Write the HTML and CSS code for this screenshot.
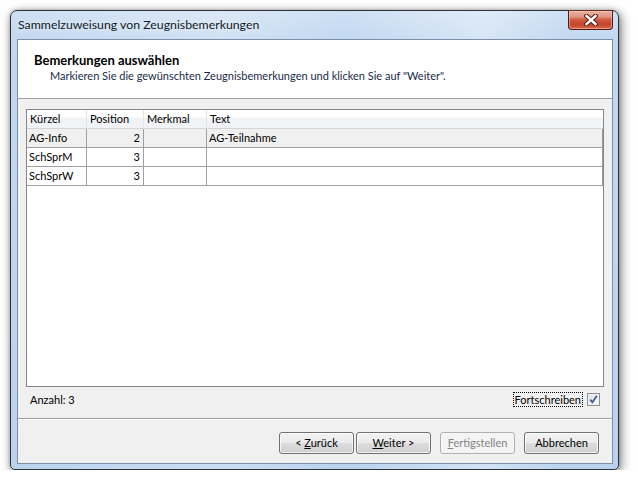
FILE: index.html
```html
<!DOCTYPE html>
<html lang="de">
<head>
<meta charset="utf-8">
<title>Sammelzuweisung von Zeugnisbemerkungen</title>
<link rel="stylesheet" href="styles.css">
</head>
<body>
<div class="desk">
  <div class="window">
    <div class="titlebar">
      <span class="title">Sammelzuweisung von Zeugnisbemerkungen</span>
      <div class="close">
        <svg width="14" height="12" viewBox="0 0 14 12">
          <path d="M2.5 2 L11.5 10 M11.5 2 L2.5 10" stroke="#5a2016" stroke-width="4.6" stroke-linecap="square" fill="none"/>
          <path d="M2.5 2 L11.5 10 M11.5 2 L2.5 10" stroke="#ffffff" stroke-width="2.4" stroke-linecap="square" fill="none"/>
        </svg>
      </div>
    </div>
    <div class="client">
      <div class="header">
        <div class="h-title">Bemerkungen auswählen</div>
        <div class="h-sub">Markieren Sie die gewünschten Zeugnisbemerkungen und klicken Sie auf "Weiter".</div>
      </div>
      <div class="content">
        <div class="grid">
          <table class="tbl">
            <thead>
              <tr>
                <th class="c1">Kürzel</th>
                <th class="c2">Position</th>
                <th class="c3">Merkmal</th>
                <th class="c4">Text</th>
              </tr>
            </thead>
            <tbody>
              <tr class="sel">
                <td>AG-Info</td>
                <td class="num">2</td>
                <td></td>
                <td class="last">AG-Teilnahme</td>
              </tr>
              <tr>
                <td>SchSprM</td>
                <td class="num">3</td>
                <td></td>
                <td class="last"></td>
              </tr>
              <tr>
                <td>SchSprW</td>
                <td class="num">3</td>
                <td></td>
                <td class="last"></td>
              </tr>
            </tbody>
          </table>
        </div>
        <div class="status">
          <span class="count">Anzahl: 3</span>
          <div class="chk">
            <span class="focus">Fortschreiben</span>
            <span class="box">
              <svg width="11" height="11" viewBox="0 0 11 11">
                <path d="M2.2 5.6 L4.4 8.3 L8.9 1.8" stroke="#3d5a98" stroke-width="1.7" fill="none"/>
              </svg>
            </span>
          </div>
        </div>
      </div>
      <div class="footer">
        <div class="btn"><span>&lt; <u>Z</u>urück</span></div>
        <div class="btn btn-next"><span><u>W</u>eiter &gt;</span></div>
        <div class="btn disabled"><span><u>F</u>ertigstellen</span></div>
        <div class="btn"><span>Abbrechen</span></div>
      </div>
    </div>
  </div>
</div>
</body>
</html>
```

FILE: styles.css
```css
html, body {
  margin: 0;
  padding: 0;
  background: #ffffff;
}

body {
  font-family: Lato, "Noto Sans", "DejaVu Sans", sans-serif;
  font-size: 11px;
  color: #000;
}

.desk {
  padding: 10px 0 0 10px;
}

.window {
  width: 596px;
  height: 453px;
  border: 1px solid #2c3038;
  border-radius: 7px 7px 5px 5px;
  padding: 0 5px 5px 6px;
  background:
    linear-gradient(90deg, rgba(255,255,255,0) 0, rgba(255,255,255,0.25) 35%, rgba(255,255,255,0) 55%, rgba(255,255,255,0.35) 78%, rgba(255,255,255,0) 92%),
    linear-gradient(180deg, #cfe0f4 0, #c2d8f0 28px, #b9d3ee 100%);
  box-shadow: 2px 3px 11px rgba(0, 0, 0, 0.5), 0 0 4px rgba(0, 0, 0, 0.25);
  display: flex;
  flex-direction: column;
}

.titlebar {
  height: 28px;
  display: flex;
  align-items: flex-start;
}

.title {
  margin-top: 6px;
  padding-left: 1px;
  font-size: 12.3px;
  line-height: 16px;
  color: #111a26;
  text-shadow: 0 0 6px rgba(255, 255, 255, 0.9);
}

.close {
  margin-left: auto;
  margin-top: -1px;
  width: 43px;
  height: 18px;
  border: 1px solid #4a1c14;
  border-top-color: #6b2a1e;
  border-radius: 0 0 4px 4px;
  background: linear-gradient(180deg, #eab1a3 0, #e29785 30%, #cf573e 50%, #c3452d 75%, #d8684d 100%);
  box-shadow: inset 0 0 0 1px rgba(255, 220, 210, 0.45);
  display: flex;
  align-items: center;
  justify-content: center;
}

.client {
  height: 425px;
  box-sizing: border-box;
  border: 1px solid #7b8fa8;
  background: #f0f0f0;
  display: flex;
  flex-direction: column;
}

.header {
  height: 58px;
  background: #ffffff;
  border-bottom: 1px solid #a0a0a0;
}

.h-title {
  font-weight: bold;
  font-size: 13px;
  line-height: 15px;
  padding: 13px 0 0 16px;
  color: #000;
}

.h-sub {
  line-height: 15px;
  padding-left: 32px;
  color: #1a2a4a;
}

.content {
  padding: 10px 8px 0 8px;
  flex: 1;
  display: flex;
  flex-direction: column;
}

.grid {
  height: 276px;
  border: 1px solid #828790;
  background: #ffffff;
}

.tbl {
  border-collapse: separate;
  border-spacing: 0;
  width: 576px;
  table-layout: fixed;
}

.tbl th {
  height: 18px;
  padding: 0 3px;
  font-weight: normal;
  text-align: left;
  line-height: 18px;
  background: linear-gradient(180deg, #ffffff 0, #ffffff 40%, #f2f3f6 45%, #f2f3f6 100%);
  border-bottom: 1px solid #d5d5d5;
  border-right: 1px solid #e4e5e8;
  white-space: nowrap;
  overflow: hidden;
}

.tbl th.c1 { width: 53px; }
.tbl th.c2 { width: 50px; }
.tbl th.c3 { width: 56px; }
.tbl th.c4 { border-right: none; }

.tbl td {
  height: 18px;
  padding: 0 2px;
  line-height: 18px;
  border-bottom: 1px solid #a0a0a0;
  border-right: 1px solid #a0a0a0;
  white-space: nowrap;
  overflow: hidden;
}

.tbl td.num {
  text-align: right;
  padding-right: 3px;
}

.tbl td.last {
  border-right: 1px solid #9a9a9a;
}

.tbl tr.sel td {
  background: #f0f0f0;
}

.status {
  flex: 1;
  display: flex;
  align-items: flex-start;
  padding: 5px 4px 0 4px;
}

.count {
  line-height: 16px;
}

.chk {
  margin-left: auto;
  display: flex;
  align-items: center;
  gap: 4px;
}

.focus {
  line-height: 13px;
  padding: 0 1px;
  border: 1px dotted #000;
}

.box {
  width: 11px;
  height: 11px;
  border: 1px solid #8e8f8f;
  background: linear-gradient(135deg, #d8dade 0, #eceef2 50%, #f8f9fb 100%);
  box-shadow: inset 0 0 0 1px #f2f2f2;
  display: flex;
  align-items: center;
  justify-content: center;
}

.footer {
  height: 45px;
  border-top: 1px solid #a0a0a0;
  box-shadow: inset 0 1px 0 #ffffff;
  display: flex;
  justify-content: flex-end;
  align-items: flex-start;
  padding: 13px 13px 0 0;
  box-sizing: border-box;
  gap: 9px;
}

.btn {
  width: 73px;
  height: 20px;
  border: 1px solid #707070;
  border-radius: 3px;
  background: linear-gradient(180deg, #f2f2f2 0, #ebebeb 50%, #dddddd 51%, #cfcfcf 100%);
  box-shadow: inset 0 0 0 1px rgba(255, 255, 255, 0.75);
  display: flex;
  align-items: center;
  justify-content: center;
  line-height: 16px;
  color: #000;
}

.btn u {
  text-decoration: underline;
  text-underline-offset: 1px;
}

.btn-next {
  margin-left: -7px;
}

.btn.disabled {
  border-color: #adb2b5;
  background: #f4f4f4;
  box-shadow: none;
  color: #838383;
}
```
